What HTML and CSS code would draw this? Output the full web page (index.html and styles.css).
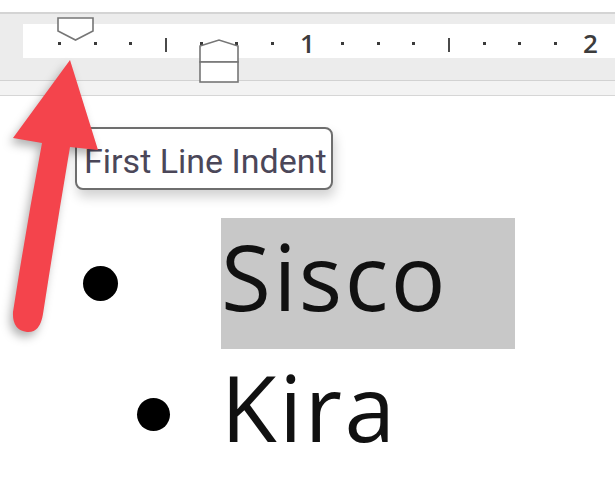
FILE: index.html
```html
<!DOCTYPE html>
<html lang="en">
<head>
    <meta charset="UTF-8">
    <meta name="viewport" content="width=device-width, initial-scale=1.0">
    <title>Ruler - First Line Indent</title>
    <link rel="stylesheet" href="styles.css">
</head>
<body>
    <div class="app">
        <div class="titlebar"></div>
        <div class="ruler">
            <div class="ruler-strip">
                <span class="tick"><i class="dot"></i></span>
                <span class="tick"><i class="dot"></i></span>
                <span class="tick"><i class="dot"></i></span>
                <span class="tick"><i class="bar"></i></span>
                <span class="tick"><i class="dot"></i></span>
                <span class="tick"><i class="dot"></i></span>
                <span class="tick"><i class="dot"></i></span>
                <span class="tick num">1</span>
                <span class="tick"><i class="dot"></i></span>
                <span class="tick"><i class="dot"></i></span>
                <span class="tick"><i class="dot"></i></span>
                <span class="tick"><i class="bar"></i></span>
                <span class="tick"><i class="dot"></i></span>
                <span class="tick"><i class="dot"></i></span>
                <span class="tick"><i class="dot"></i></span>
                <span class="tick num">2</span>
            </div>
            <!-- first line indent marker -->
            <svg class="marker marker-first" width="40" height="27" viewBox="0 0 40 27">
                <polygon points="2,2 37,2 37,15 19.5,24 2,15" />
            </svg>
            <!-- hanging indent + left indent marker -->
            <svg class="marker marker-hanging" width="42" height="46" viewBox="0 0 42 46">
                <polygon points="2,8 21,2 40,8 40,24 2,24" />
                <rect x="2" y="24" width="38" height="20" />
            </svg>
        </div>
        <div class="ruler-foot"></div>

        <div class="page">
            <ul class="list">
                <li class="item">
                    <span class="bullet"></span>
                    <span class="text selected">Sisco</span>
                </li>
                <li class="item item-hanging">
                    <span class="bullet"></span>
                    <span class="text">Kira</span>
                </li>
            </ul>
        </div>

        <div class="tooltip">First Line Indent</div>

        <svg class="callout-arrow" width="120" height="345" viewBox="0 0 120 345">
            <path d="M70,60 L98,150 L70,147 Q56,230 43,314 Q40,333 27,332 Q12,330 13,312 Q26,228 42,143 L13,138 Z" />
        </svg>
    </div>
</body>
</html>
```

FILE: styles.css
```css
body {
    margin: 0;
    background-color: #ffffff;
    font-family: "Open Sans", Arial, sans-serif;
}
.app {
    position: relative;
    width: 615px;
    height: 503px;
    overflow: hidden;
}
.titlebar {
    height: 12px;
    background-color: #ffffff;
}
.ruler {
    position: relative;
    height: 56px;
    border-top: 2px solid #d4d4d4;
    background-color: #ececec;
    padding: 10px 0 0 23px;
    box-sizing: content-box;
}
.ruler-strip {
    display: flex;
    align-items: center;
    height: 34px;
    padding: 4px 0 0 19px;
    box-sizing: border-box;
    background-color: #ffffff;
}
.tick {
    flex: 0 0 35.4px;
    display: flex;
    align-items: center;
    justify-content: center;
}
.dot {
    width: 3px;
    height: 3px;
    background-color: #3a3a3a;
}
.bar {
    width: 2px;
    height: 14px;
    margin-top: 3px;
    background-color: #4a4a4a;
}
.num {
    font-size: 26px;
    font-weight: 600;
    color: #3c3c3c;
    line-height: 26px;
}
.marker {
    position: absolute;
    fill: #ffffff;
    stroke: #767676;
    stroke-width: 1.6;
}
.marker-first {
    left: 56px;
    top: 2px;
}
.marker-hanging {
    left: 198px;
    top: 24px;
}
.ruler-foot {
    height: 14px;
    border-top: 1px solid #d2d2d2;
    border-bottom: 1px solid #d6d6d6;
    background-color: #f3f3f3;
}
.page {
    padding-top: 122px;
}
.list {
    list-style: none;
    margin: 0;
    padding: 0;
}
.item {
    display: grid;
    grid-template-columns: 221px auto;
    align-items: start;
    height: 131px;
}
.bullet {
    width: 35px;
    height: 35px;
    margin: 48px 0 0 83px;
    border-radius: 50%;
    background-color: #000000;
}
.item-hanging .bullet {
    width: 33px;
    height: 33px;
    margin: 49px 0 0 137px;
}
.text {
    font-size: 91px;
    line-height: 91px;
    letter-spacing: 2.5px;
    padding-top: 13px;
    color: #111111;
    justify-self: start;
}
.selected {
    width: 294px;
    height: 131px;
    box-sizing: border-box;
    background-color: #c8c8c8;
}
.tooltip {
    position: absolute;
    left: 75px;
    top: 127px;
    width: 258px;
    height: 63px;
    box-sizing: border-box;
    padding: 15px 0 0 7px;
    border: 2px solid #6e6e6e;
    border-radius: 8px;
    background-color: #ffffff;
    box-shadow: 2px 7px 12px rgba(0, 0, 0, 0.18);
    font-family: Roboto, "Open Sans", sans-serif;
    font-size: 34px;
    line-height: 34px;
    color: #4b4759;
    white-space: nowrap;
}
.callout-arrow {
    position: absolute;
    left: 0;
    top: 0;
    fill: #f4444c;
    filter: drop-shadow(-3px 5px 5px rgba(0, 0, 0, 0.3));
}
```
